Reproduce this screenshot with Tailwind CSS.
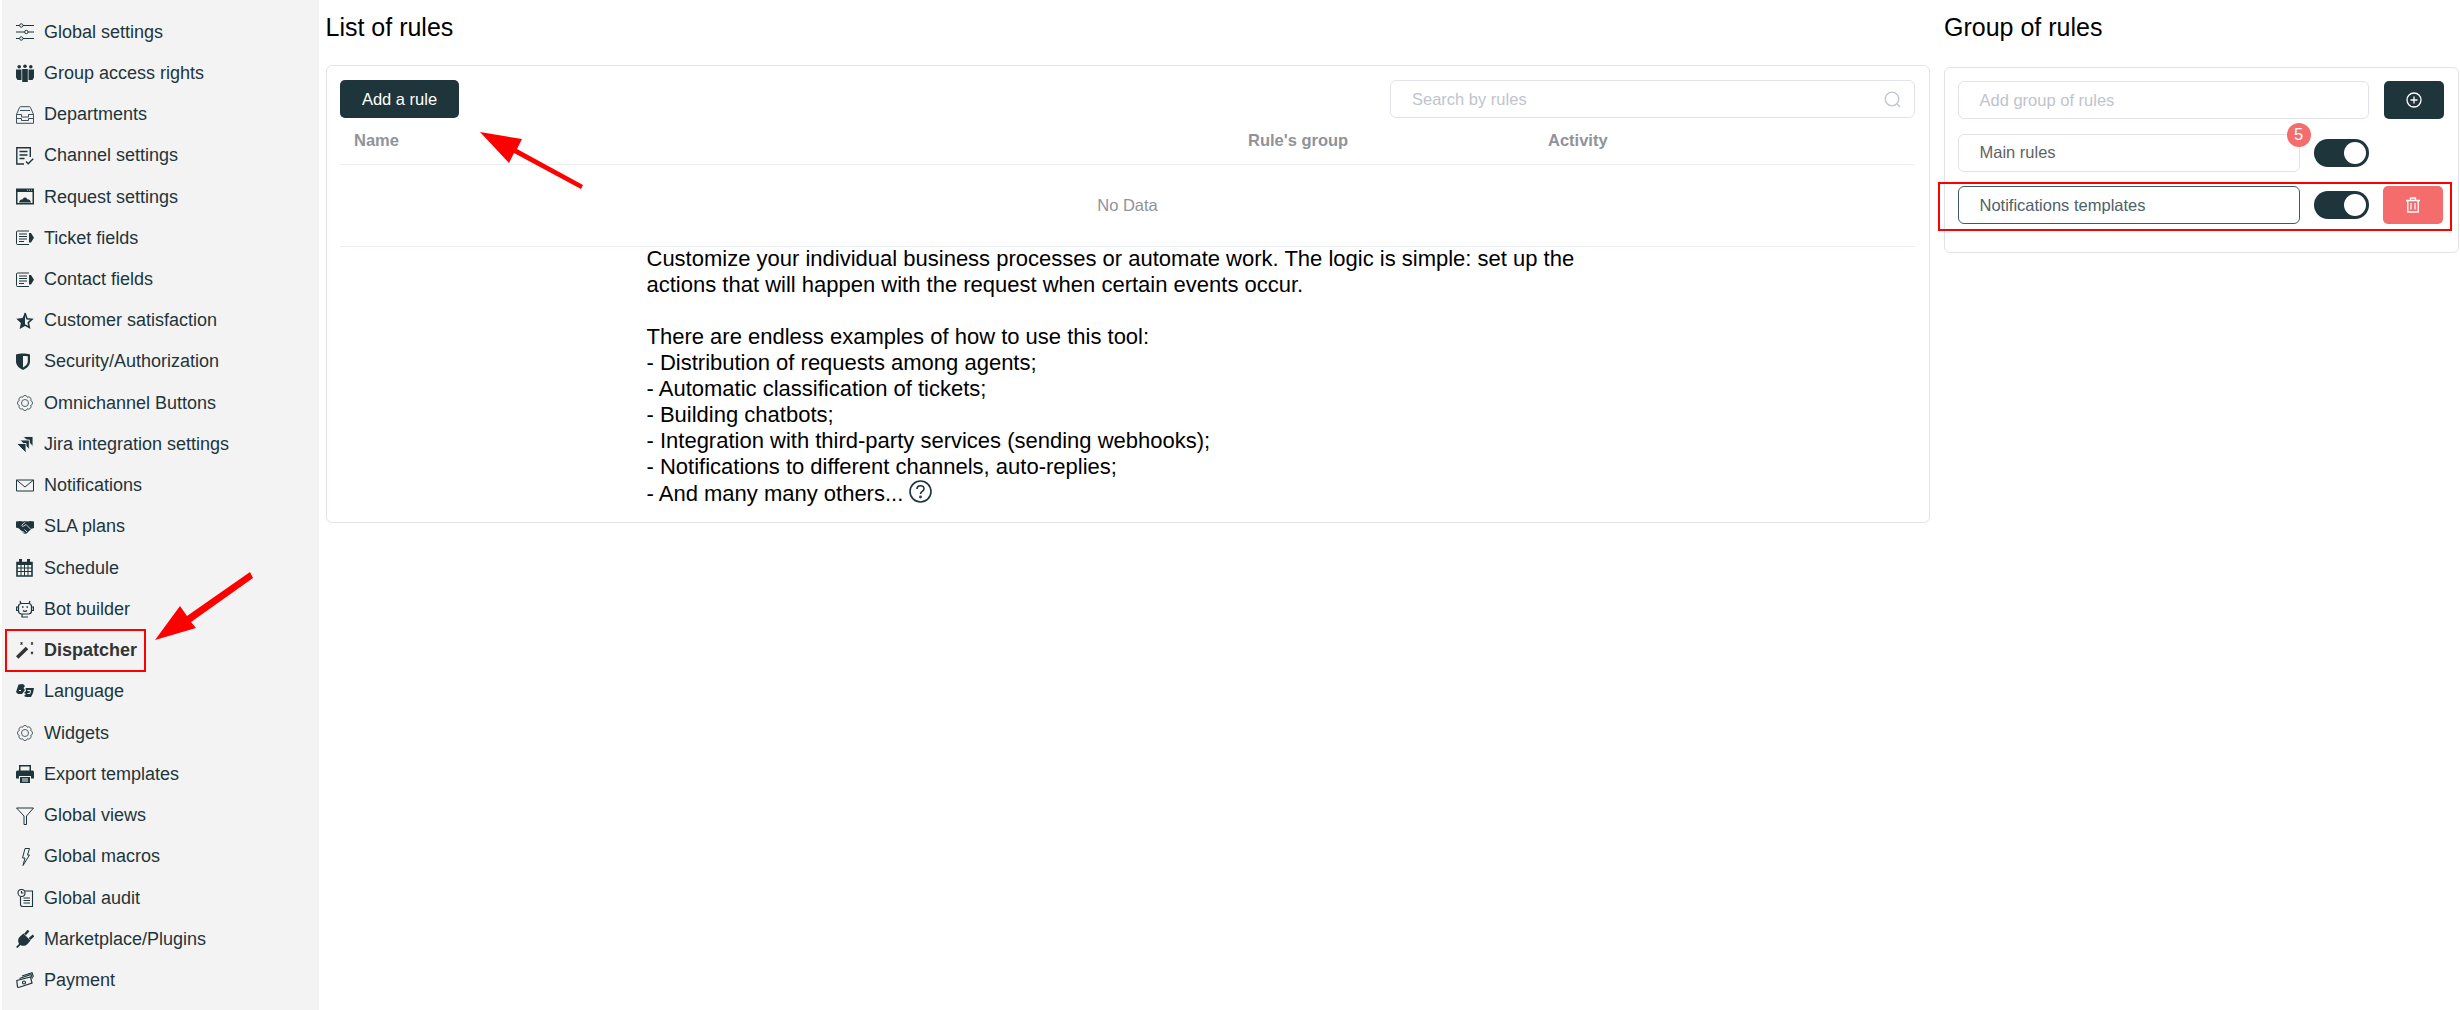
<!DOCTYPE html>
<html lang="en">
<head>
    <meta charset="UTF-8">
    <title>Dispatcher</title>
    <script src="https://cdn.jsdelivr.net/npm/@tailwindcss/browser@4"></script>
</head>
<body class="relative bg-white h-[1010px] w-[2460px] overflow-hidden font-['Liberation_Sans',Arial,sans-serif] flex">
    <!-- sidebar -->
    <nav class="ml-[2px] w-[317px] shrink-0 h-full bg-[#f3f3f3] pt-[11.5px] text-[18px] text-[#1e353b]">
        <a class="h-[41.24px] flex items-center gap-[10px] pl-[14px]">
            <svg class="w-[18px] h-[18px] shrink-0" viewBox="0 0 18 18" fill="none" stroke="currentColor" stroke-width="1"><path d="M0 2.500h3.500M7 2.500h11M0 9h8.500M12 9h6M0 15.500h3.500M7 15.500h11"/><circle cx="5.300" cy="2.500" r="1.700"/><circle cx="10.300" cy="9" r="1.700"/><circle cx="5.300" cy="15.500" r="1.700"/></svg>
            <span>Global settings</span>
        </a>
        <a class="h-[41.24px] flex items-center gap-[10px] pl-[14px]">
            <svg class="w-[18px] h-[18px] shrink-0" viewBox="0 0 18 18" fill="currentColor"><circle cx="3.200" cy="2.700" r="1.800"/><circle cx="9" cy="2.200" r="1.800"/><circle cx="14.800" cy="2.700" r="1.800"/><path d="M0 5.500h5.500v10.500H1.500L0 13.500zM6.200 5h5.600v13H6.200zM12.500 5.500H18v8L16.500 16h-4z"/></svg>
            <span>Group access rights</span>
        </a>
        <a class="h-[41.24px] flex items-center gap-[10px] pl-[14px]">
            <svg class="w-[18px] h-[18px] shrink-0 text-[#3d5158]" viewBox="0 0 18 18" fill="none" stroke="currentColor" stroke-width="1"><path d="M.5 8.500 3.500 1.500a1 1 0 0 1 1-.8h9a1 1 0 0 1 1 .8l3 7v8.800H.5zM.5 8.500h5v2.500h7V8.500h5M4 4.500h10M.5 12.500h5v2h7v-2h5"/></svg>
            <span>Departments</span>
        </a>
        <a class="h-[41.24px] flex items-center gap-[10px] pl-[14px]">
            <svg class="w-[18px] h-[18px] shrink-0" viewBox="0 0 18 18" fill="none" stroke="currentColor" stroke-width="1.400"><path d="M8 17H.8V.7h13.500V10M3.500 4.500h8M3.500 8h8M3.500 11.500h5M10 14.500l2.200 2.200 5-5"/></svg>
            <span>Channel settings</span>
        </a>
        <a class="h-[41.24px] flex items-center gap-[10px] pl-[14px]">
            <svg class="w-[18px] h-[18px] shrink-0" viewBox="0 0 18 18"><path fill="currentColor" d="M0 .5h18v16H0z"/><path fill="#f3f3f3" d="M1.500 4h15v11h-15z"/><path fill="currentColor" d="M3 14.500c.5-2.500 2-3 3-3s1-2 3-2 2 2 3 2 2.500.5 3 3z"/><path stroke="#f3f3f3" stroke-width=".8" d="M11 2.200h1M13 2.200h1M15 2.200h1"/></svg>
            <span>Request settings</span>
        </a>
        <a class="h-[41.24px] flex items-center gap-[10px] pl-[14px]">
            <svg class="w-[18px] h-[18px] shrink-0" viewBox="0 0 18 18" fill="none" stroke="currentColor" stroke-width="1"><path d="M13 2H1.500a1 1 0 0 0-1 1v11.500a1 1 0 0 0 1 1H13M3 5h8M3 7.500h8M3 10h8M3 12.500h5"/><path fill="currentColor" stroke="none" d="M13 4h2l3 4.700-3 4.700h-2z"/></svg>
            <span>Ticket fields</span>
        </a>
        <a class="h-[41.24px] flex items-center gap-[10px] pl-[14px]">
            <svg class="w-[18px] h-[18px] shrink-0" viewBox="0 0 18 18" fill="none" stroke="currentColor" stroke-width="1"><path d="M13 2H1.500a1 1 0 0 0-1 1v11.500a1 1 0 0 0 1 1H13M3 5h8M3 7.500h8M3 10h8M3 12.500h5"/><path fill="currentColor" stroke="none" d="M13 4h2l3 4.700-3 4.700h-2z"/></svg>
            <span>Contact fields</span>
        </a>
        <a class="h-[41.24px] flex items-center gap-[10px] pl-[14px]">
            <svg class="w-[18px] h-[18px] shrink-0" viewBox="0 0 18 18"><path fill="currentColor" d="M9 .5 6.500 6 .3 6.700l4.600 4.200-1.300 6.100L9 13.900z"/><path fill="none" stroke="currentColor" stroke-width="1.600" d="M9 1 11 6.700l4.900.6-3.600 3.300 1 4.800L9 13"/></svg>
            <span>Customer satisfaction</span>
        </a>
        <a class="h-[41.24px] flex items-center gap-[10px] pl-[14px]">
            <svg class="w-[18px] h-[18px] shrink-0" viewBox="0 0 18 18"><path fill="currentColor" d="M0 1.500C2 .8 5 .5 7 .5s5 .3 7 1v7c0 4-3.500 7-7 8.500-3.500-1.500-7-4.500-7-8.500z"/><path fill="#f3f3f3" d="M7 3v11.500c2.500-1.200 4.800-3.400 4.800-6.200V3.300C10 3 8.500 3 7 3z"/></svg>
            <span>Security/Authorization</span>
        </a>
        <a class="h-[41.24px] flex items-center gap-[10px] pl-[14px]">
            <svg class="w-[18px] h-[18px] shrink-0 text-[#3d5158]" viewBox="0 0 18 18" fill="none" stroke="currentColor" stroke-width=".9"><path d="M6.630 3.270a2.450 2.450 0 0 1 4.740 0 2.450 2.450 0 0 1 3.360 3.360 2.450 2.450 0 0 1 0 4.740 2.450 2.450 0 0 1-3.360 3.360 2.450 2.450 0 0 1-4.740 0 2.450 2.450 0 0 1-3.360-3.360 2.450 2.450 0 0 1 0-4.740 2.450 2.450 0 0 1 3.360-3.360z"/><circle cx="9" cy="9" r="3.500"/></svg>
            <span>Omnichannel Buttons</span>
        </a>
        <a class="h-[41.24px] flex items-center gap-[10px] pl-[14px]">
            <svg class="w-[18px] h-[18px] shrink-0" viewBox="0 0 18 18" fill="currentColor" stroke="#f3f3f3" stroke-width=".9"><path d="M7 1.500h10v10z"/><path d="M3.800 5h9.500v9.500z"/><path d="M.5 8.500h9.500V18z"/></svg>
            <span>Jira integration settings</span>
        </a>
        <a class="h-[41.24px] flex items-center gap-[10px] pl-[14px]">
            <svg class="w-[18px] h-[18px] shrink-0" viewBox="0 0 18 18" fill="none" stroke="currentColor" stroke-width="1"><path d="M.5 3h17v11H.5zM.5 3 9 10l8.500-7"/></svg>
            <span>Notifications</span>
        </a>
        <a class="h-[41.24px] flex items-center gap-[10px] pl-[14px]">
            <svg class="w-[18px] h-[18px] shrink-0" viewBox="0 0 18 18"><path fill="currentColor" d="M0 3.500 4 3l3 .5 2-.5 3 .5 2-.5 4 .5v6.500l-2.500.8-5 4.700c-1 .8-2 .5-3-.3L3 10.500 0 9.500z"/><path fill="none" stroke="#f3f3f3" stroke-width=".8" d="M9.500 3.800 6 7c-.7 1 .6 1.800 1.500 1.200L10 6.500l4.500 4.500M7 14.500l-2-2M9 15.500l-2.500-2.500M11 14l-2.500-2.500"/></svg>
            <span>SLA plans</span>
        </a>
        <a class="h-[41.24px] flex items-center gap-[10px] pl-[14px]">
            <svg class="w-[18px] h-[18px] shrink-0" viewBox="0 0 18 18" fill="none" stroke="currentColor"><path stroke-width="1.600" d="M1 3.500h15v13.500H1z"/><path stroke-width="3" d="M1 4.500h15M4.500 0v3M12.500 0v3"/><path stroke-width="1" d="M1 9h15M1 12.500h15M5 6v11M8.500 6v11M12 6v11"/></svg>
            <span>Schedule</span>
        </a>
        <a class="h-[41.24px] flex items-center gap-[10px] pl-[14px]">
            <svg class="w-[18px] h-[18px] shrink-0" viewBox="0 0 18 18" fill="none" stroke="currentColor" stroke-width="1.200"><rect x="2.500" y="3.500" width="13" height="10.500" rx="3"/><path d="M5 3.500 4 1M13 3.500 14 1M2.500 7H.6v3.500h1.900M15.500 7h1.900v3.500h-1.900M6 14v3h6M7 10.500c1 1.200 3 1.200 4 0"/><path stroke-width="1.600" d="M6 7h1.500M10.500 7H12"/></svg>
            <span>Bot builder</span>
        </a>
        <a class="h-[41.24px] flex items-center gap-[10px] pl-[14px] font-bold text-[#333]">
            <svg class="w-[18px] h-[18px] shrink-0" viewBox="0 0 18 18" fill="none" stroke="#333"><path stroke-width="3.600" d="M1.200 15.500 11 6"/><path stroke-width="1.100" d="M4.500.5l2 2M6.500.5l-2 2M15 .5l2 2M17 .5l-2 2M15 10l2 2M17 10l-2 2"/></svg>
            <span>Dispatcher</span>
        </a>
        <a class="h-[41.24px] flex items-center gap-[10px] pl-[14px]">
            <svg class="w-[18px] h-[18px] shrink-0" viewBox="0 0 18 18" fill="currentColor"><path d="M0 9 2.500 1.500 7 1l2 2-1.500 2 1.500 2-3 4H2z"/><path d="M9.500 5H18l-1 5-2 4h-5l-2-1 2-2-2-1 2-2z"/><path stroke="#f3f3f3" stroke-width="1" d="M11.500 7.500h3l-.5 3h-2.500M3 7.500h2"/></svg>
            <span>Language</span>
        </a>
        <a class="h-[41.24px] flex items-center gap-[10px] pl-[14px]">
            <svg class="w-[18px] h-[18px] shrink-0 text-[#3d5158]" viewBox="0 0 18 18" fill="none" stroke="currentColor" stroke-width=".9"><path d="M6.630 3.270a2.450 2.450 0 0 1 4.740 0 2.450 2.450 0 0 1 3.360 3.360 2.450 2.450 0 0 1 0 4.740 2.450 2.450 0 0 1-3.360 3.360 2.450 2.450 0 0 1-4.740 0 2.450 2.450 0 0 1-3.360-3.360 2.450 2.450 0 0 1 0-4.740 2.450 2.450 0 0 1 3.360-3.360z"/><circle cx="9" cy="9" r="3.500"/></svg>
            <span>Widgets</span>
        </a>
        <a class="h-[41.24px] flex items-center gap-[10px] pl-[14px]">
            <svg class="w-[18px] h-[18px] shrink-0" viewBox="0 0 18 18"><path fill="currentColor" d="M3 0h12v5.500H3zM1.500 5.500h15A1.500 1.500 0 0 1 18 7v6.500h-3V11H3v2.500H0V7a1.500 1.500 0 0 1 1.500-1.500zM4 12h10v6H4z"/><path stroke="#f3f3f3" d="M6 14h6M6 16h6"/><path fill="#f3f3f3" d="M4.500 1.500h9v4h-9z"/></svg>
            <span>Export templates</span>
        </a>
        <a class="h-[41.24px] flex items-center gap-[10px] pl-[14px]">
            <svg class="w-[18px] h-[18px] shrink-0" viewBox="0 0 18 18" fill="none" stroke="currentColor" stroke-width="1"><path d="M.5 1h17l-7 8v8.500H8V9z"/></svg>
            <span>Global views</span>
        </a>
        <a class="h-[41.24px] flex items-center gap-[10px] pl-[14px]">
            <svg class="w-[18px] h-[18px] shrink-0" viewBox="0 0 18 18" fill="none" stroke="currentColor" stroke-width="1"><path d="M9 .5h4.500l-2 6.500h2L7 17.500 9 10H6.500z"/></svg>
            <span>Global macros</span>
        </a>
        <a class="h-[41.24px] flex items-center gap-[10px] pl-[14px]">
            <svg class="w-[18px] h-[18px] shrink-0" viewBox="0 0 18 18" fill="none" stroke="currentColor" stroke-width="1.100"><circle cx="5.500" cy="4" r="3.500"/><path d="M5.500 2v2H7.500M9 2h7.500v15.500H6.500a2 2 0 0 1-2-2V8M7.500 9h6.500M7.500 11.500h6.500M7.500 14h6.500"/></svg>
            <span>Global audit</span>
        </a>
        <a class="h-[41.24px] flex items-center gap-[10px] pl-[14px]">
            <svg class="w-[18px] h-[18px] shrink-0" viewBox="0 0 18 18" fill="currentColor"><path d="M0 17 3 14C1.500 11 2 8 4 6.500L7.500 3.500 14.500 10.500 11.500 14C9.500 16 7 16.500 4.500 15L1.500 18z"/><path stroke="currentColor" stroke-width="2.400" d="M9 4.500 12.500.5M13.500 9l4-3.500"/></svg>
            <span>Marketplace/Plugins</span>
        </a>
        <a class="h-[41.24px] flex items-center gap-[10px] pl-[14px]">
            <svg class="w-[18px] h-[18px] shrink-0" viewBox="0 0 18 18" fill="none" stroke="currentColor" stroke-width="1.200"><path d="M.8 8.500 14.500 5l1.500 6L2.500 15.500a1 1 0 0 1-1-.7z"/><path d="M3.500 6.500 15 2.500l1.500 4M6 4 16 .8l1.500 4"/><circle cx="8" cy="10.500" r="1.500"/></svg>
            <span>Payment</span>
        </a>
    </nav>

    <!-- list of rules -->
    <section class="ml-[6.5px] w-[1604.5px] shrink-0">
        <h2 class="h-[65px] pb-[9px] flex items-center text-[25px] text-black">List of rules</h2>
        <div class="border-[1.5px] border-[#e2e3ea] rounded-[6px] pl-[13.5px] pr-[14px] pt-[14px] pb-[15px] h-[457.5px]">
            <div class="flex justify-between">
                <button class="w-[119px] h-[38px] rounded-[5px] bg-[#1e353b] text-white text-[16.5px]">Add a rule</button>
                <div class="w-[525px] h-[38px] border-[1.5px] border-[#e2e3ea] rounded-[6px] flex items-center justify-between pl-[21px] pr-[13px]">
                    <span class="text-[16.5px] text-[#c0c4cc]">Search by rules</span>
                    <svg class="w-[17px] h-[17px]" viewBox="0 0 17 17" fill="none" stroke="#c0c4cc" stroke-width="1.300"><circle cx="8" cy="8" r="6.800"/><path d="m13 13 3 3"/></svg>
                </div>
            </div>
            <div class="h-[47px] pb-[2px] border-b-[1.5px] border-[#ebeef5] flex items-center text-[16.5px] font-bold text-[#909399]">
                <span class="ml-[14px] w-[894px]">Name</span>
                <span class="w-[300px]">Rule's group</span>
                <span>Activity</span>
            </div>
            <div class="h-[82px] border-b-[1.5px] border-[#ebeef5] flex items-center justify-center text-[16.5px] text-[#909399]">No Data</div>
            <p class="mt-[-1px] ml-[306.5px] text-[22px] leading-[26px] text-black whitespace-nowrap">
                Customize your individual business processes or automate work. The logic is simple: set up the<br>
                actions that will happen with the request when certain events occur.<br>
                <br>
                There are endless examples of how to use this tool:<br>
                - Distribution of requests among agents;<br>
                - Automatic classification of tickets;<br>
                - Building chatbots;<br>
                - Integration with third-party services (sending webhooks);<br>
                - Notifications to different channels, auto-replies;<br>
                - And many many others...
                <svg class="inline-block align-[-2px] w-[23px] h-[23px] text-[#1e353b]" viewBox="0 0 23 23" fill="none" stroke="currentColor" stroke-width="1.600"><circle cx="11.500" cy="11.500" r="10.500"/><path d="M8 9c0-2 1.500-3.300 3.500-3.300S15 7 15 8.800c0 2.500-3.500 2.700-3.500 5.200"/><circle cx="11.500" cy="17" r=".6"/></svg>
            </p>
        </div>
    </section>

    <!-- group of rules -->
    <section class="ml-[14px] w-[514.5px] shrink-0">
        <h2 class="h-[67px] pb-[11px] flex items-center text-[25px] text-black">Group of rules</h2>
        <div class="border-[1.5px] border-[#e2e3ea] rounded-[6px] pl-[12.5px] pr-[14px] pt-[12.5px] h-[185.5px] flex flex-col gap-[15px]">
            <div class="flex justify-between">
                <div class="w-[411px] h-[38px] border-[1.5px] border-[#e2e3ea] rounded-[6px] flex items-center pl-[21px] pt-[1px] text-[16.5px] text-[#c0c4cc]">Add group of rules</div>
                <button class="w-[60px] h-[38px] rounded-[5px] bg-[#1e353b] flex items-center justify-center">
                    <svg class="w-[16px] h-[16px]" viewBox="0 0 16 16" fill="none" stroke="white" stroke-width="1.300"><circle cx="8" cy="8" r="7"/><path d="M8 4.500v7M4.500 8h7"/></svg>
                </button>
            </div>
            <div class="flex items-center h-[38px] gap-[14px]">
                <div class="relative w-[342px] h-[38px] border-[1.5px] border-[#e2e3ea] rounded-[6px] flex items-center pl-[21px] text-[16.5px] text-[#606266]">
                    Main rules
                    <span class="absolute right-[-12px] top-[-12px] w-[24px] h-[24px] rounded-full bg-[#f56c6c] text-white text-[16.5px] flex items-center justify-center">5</span>
                </div>
                <span class="w-[55px] h-[28px] rounded-full bg-[#1e353b] flex items-center justify-end pr-[3px]"><span class="w-[22px] h-[22px] rounded-full bg-white"></span></span>
            </div>
            <div class="flex items-center h-[38px] gap-[14px] mt-[-1px]">
                <div class="w-[342px] h-[38px] border-[1.5px] border-[#3f5a62] rounded-[6px] flex items-center pl-[21px] pt-[1px] text-[16.5px] text-[#4d6169]">Notifications templates</div>
                <span class="w-[55px] h-[28px] rounded-full bg-[#1e353b] flex items-center justify-end pr-[3px]"><span class="w-[22px] h-[22px] rounded-full bg-white"></span></span>
                <button class="w-[60px] h-[38px] rounded-[5px] bg-[#f56c6c] flex items-center justify-center">
                    <svg class="w-[16px] h-[16px]" viewBox="0 0 16 16" fill="none" stroke="white" stroke-width="1.300"><path d="M1 3.500h14M5.500 3.500V1h5v2.500M2.800 3.500V15h10.400V3.500M6 6v6.500M10 6v6.500"/></svg>
                </button>
            </div>
        </div>
    </section>

    <!-- red annotations over the screenshot -->
    <div class="absolute left-[5px] top-[629px] w-[141px] h-[43px] border-[2.5px] border-[#ff0000]"></div>
    <div class="absolute left-[1938px] top-[182px] w-[514px] h-[49px] border-[2.5px] border-[#ff0000]"></div>
    <svg class="absolute left-0 top-0 w-[2460px] h-[1010px] pointer-events-none" viewBox="0 0 2460 1010" fill="#ff0000">
        <polygon points="155,640 180,606 187,616 250,572 253,578 191,622 196,628"/>
        <polygon points="480,132 522,139 517,149 583,185 581,189 514,153 509,163"/>
    </svg>
</body>
</html>
